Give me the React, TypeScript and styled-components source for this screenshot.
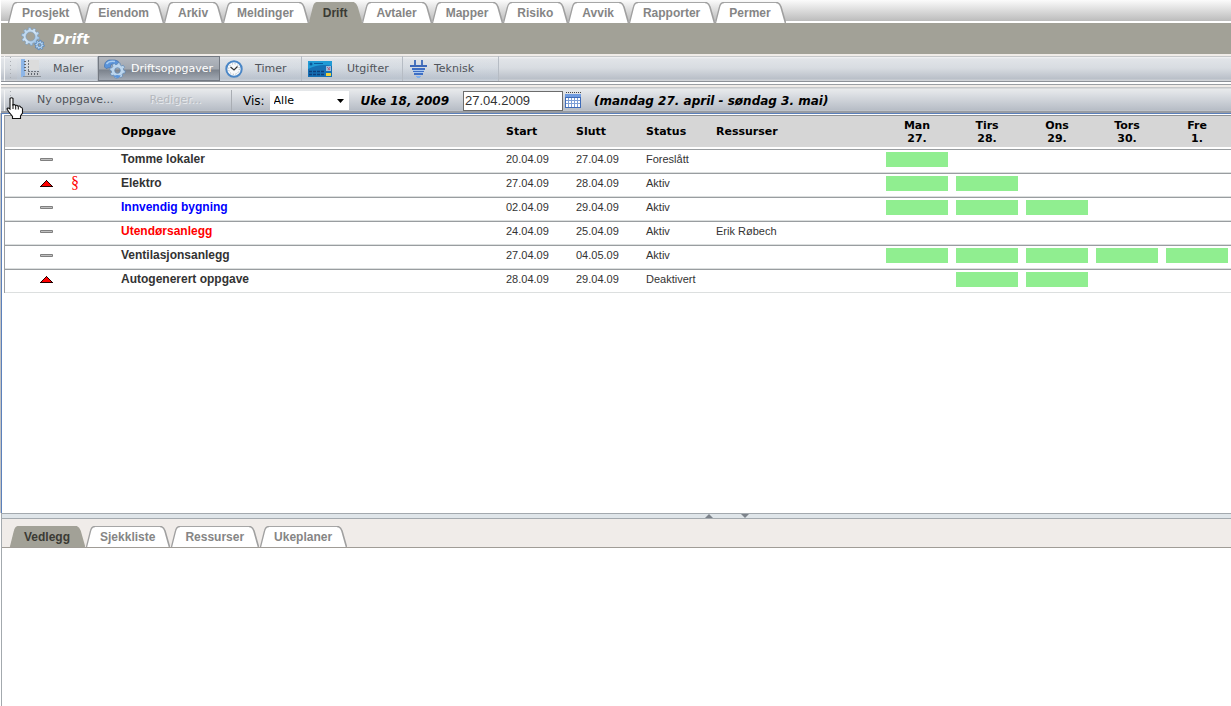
import React, { useState } from "react";
import styled, { createGlobalStyle, css } from "styled-components";

const ARIAL = `"Liberation Sans", Arial, sans-serif`;
const VERDANA = `Verdana, "DejaVu Sans", sans-serif`;
const OLIVE = "#a2a197";

const GlobalStyle = createGlobalStyle`
  * { box-sizing: border-box; }
  html, body, #root { height: 100%; }
  body { margin: 0; background: #fff; font: 11px/14px ${ARIAL}; color: #333; }
  button, input, select { font: inherit; margin: 0; }
`;

const Page = styled.div`
  min-height: 100%;
  display: flex;
  flex-direction: column;
  margin-left: 1px;
`;

const TopTabs = styled.nav`
  height: 23px;
  display: flex;
  align-items: flex-end;
  padding-left: 6px;
  background: linear-gradient(#fbfbfb, #bcbcbc 21px, #fff 21px);
  & > a + a { margin-left: -1px; }
`;

const TabLink = styled.a<{ $active?: boolean }>`
  height: 21px;
  display: flex;
  text-decoration: none;
  font: bold 12px/20px ${ARIAL};
  color: ${(p) => (p.$active ? "#3a3a34" : "#858585")};
`;

const TabLabel = styled.span<{ $active?: boolean }>`
  padding: 0 5px;
  border-top: 1px solid ${(p) => (p.$active ? OLIVE : "#a6a6a6")};
  background: ${(p) => (p.$active ? OLIVE : "#fff")};
`;

const Slope = styled.svg`
  width: 10px;
  height: 21px;
  flex: none;
`;

const TitleBar = styled.header`
  height: 31px;
  flex: none;
  display: flex;
  align-items: center;
  gap: 8px;
  padding-left: 20px;
  background: ${OLIVE};
`;

const Title = styled.h1`
  margin: 0;
  font: italic bold 14px/20px ${VERDANA};
  color: #fff;
`;

const Toolbar = styled.div`
  flex: none;
  height: 28px;
  display: flex;
  align-items: stretch;
  padding: 0 0 0 3px;
  border-top: 2px solid #f0ece8;
  border-bottom: 1px solid #8d9197;
  background: linear-gradient(#c6c8ca 0, #c6c8ca 1px, #f2f3f4 1px, #e1e4e8 3px, #d8dce1 12px, #b9bfc8 23px, #d0d3d7 24px);
`;

const FilterBar = styled(Toolbar)`
  height: 29px;
  margin-top: 2px;
  padding-top: 5px;
  border-top: 1px solid #9b9fa3;
  border-bottom: 2px solid #989ca2;
  background: linear-gradient(#f0ece8 2px, #c6c8ca 2px, #c6c8ca 3px, #e8eaec 4px, #dfe2e6 8px, #b7bdc6 25px, #c6cad0 26px);
`;

const Grip = styled.span`
  width: 13px;
  border-left: 1px solid #f2f3f4;
  background: linear-gradient(#a9adb2 1px, transparent 1px) 5px 5px / 1px 4px repeat-y;
`;

const ToolButton = styled.button<{ $w: number; $gap: number; $pad: number; $pressed?: boolean }>`
  width: ${(p) => p.$w}px;
  display: flex;
  align-items: center;
  gap: ${(p) => p.$gap}px;
  padding: 0 0 0 ${(p) => p.$pad}px;
  border: 0;
  border-right: 1px solid #b6bcc4;
  background: linear-gradient(transparent, rgba(190, 205, 222, 0.3));
  font: 11px/14px ${VERDANA};
  color: #50545a;
  white-space: nowrap;
  ${(p) =>
    p.$pressed &&
    css`
      color: #fff;
      border: 1px solid #737982;
      background: linear-gradient(#b3b8bf, #a0a6ae 12px, #7b828c 13px, #a2a9b3);
    `}
`;

const TextButton = styled.button`
  border: 0;
  padding: 0 16px 0 20px;
  background: none;
  font: 11px/14px ${VERDANA};
  color: #50545a;
  &:disabled { color: #b4b8be; text-shadow: 1px 1px 0 #e8eaed; }
`;

const Actions = styled.div`
  width: 215px;
  display: flex;
  align-items: center;
  border-right: 1px solid #a9adb3;
  padding-bottom: 2px;
`;

const Filters = styled.div`
  display: flex;
  align-items: center;
  padding-left: 11px;
  font: 12px/16px ${VERDANA};
  color: #000;
`;

const TypeSelect = styled.select`
  width: 79px;
  height: 19px;
  margin: 0 12px 0 5px;
  padding: 0 0 0 4px;
  border: 0;
  border-radius: 0;
  appearance: none;
  color: #000;
  font: 11px/18px ${VERDANA};
  background: #fff url("data:image/svg+xml,%3Csvg xmlns='http://www.w3.org/2000/svg' width='7' height='4'%3E%3Cpath d='M0 0h7L3.500 4z'/%3E%3C/svg%3E") no-repeat right 5px center;
`;

const Period = styled.strong`
  font: italic bold 12px/16px ${VERDANA};
  white-space: nowrap;
`;

const DateInput = styled.input`
  width: 100px;
  height: 20px;
  margin: 0 2px 0 14px;
  padding: 0 1px;
  border: 1px solid #6c6c6c;
  background: #fff;
  color: #333;
  font: 13px/16px ${ARIAL};
`;

const IconButton = styled.button`
  display: flex;
  padding: 0 0 2px;
  margin-right: 13px;
  border: 0;
  background: none;
`;

const TaskPane = styled.main`
  flex: none;
  min-height: 400px;
  padding: 1px 0 0 2px;
  border-top: 1px solid #5b80bb;
  border-left: 1px solid #5b80bb;
  box-shadow: -1px 0 0 #c3c3c3;
`;

const TaskTable = styled.table`
  width: 100%;
  table-layout: fixed;
  border-collapse: separate;
  border-spacing: 0;
  border-left: 1px solid #999da2;
`;

const HeadCell = styled.th<{ $center?: boolean }>`
  height: 32px;
  padding: 0 0 0 ${(p) => (p.$center ? 2 : 5)}px;
  border-top: 1px solid #8e9194;
  background: #d6d6d6;
  color: #000;
  font: bold 11px/13px ${VERDANA};
  text-align: ${(p) => (p.$center ? "center" : "left")};
`;

const GapCell = styled.td`
  height: 2px;
  padding: 0;
`;

const Cell = styled.td`
  height: 24px;
  padding: 0 3px 4px 5px;
  border-top: 1px solid #999da0;
  border-bottom: 1px solid #dcdfdf;
  color: #333;
  white-space: nowrap;
`;

const NameCell = styled(Cell)<{ $color?: string }>`
  font: bold 12px/14px ${ARIAL};
  color: ${(p) => p.$color ?? "#333"};
`;

const Bar = styled.div`
  height: 15px;
  background: #90ee90;
`;

const Paragraph = styled.span`
  display: block;
  padding-left: 1px;
  font: 16px/16px "Liberation Serif", serif;
  color: #f00;
`;

const Mark = styled.svg`
  display: block;
  margin-left: 30px;
`;

const Splitter = styled.div`
  flex: none;
  height: 6px;
  display: flex;
  justify-content: center;
  align-items: center;
  gap: 28px;
  padding-left: 220px;
  border: solid #a3a9ae;
  border-width: 1px 0 1px 1px;
  background: #dfe5e9;
`;

const Details = styled.section`
  flex: 1;
  border-left: 1px solid #a3a9ae;
`;

const DetailTabs = styled.nav`
  height: 29px;
  display: flex;
  align-items: flex-end;
  padding-left: 7px;
  border-bottom: 1px solid #a09c96;
  background: #f0ece9;
`;

const Hand = styled.svg`
  position: absolute;
  left: 6px;
  top: 96px;
`;

function Tab({ label, active }: { label: string; active?: boolean }) {
  const fill = active ? OLIVE : "#fff";
  const stroke = active ? OLIVE : "#a0a0a0";
  return (
    <TabLink href="#" $active={active}>
      <Slope viewBox="0 0 10 21">
        <path d="M1.500 21 L5.500 5 Q6.500 .5 10 .5 V21Z" fill={fill} />
        <path d="M1.500 21 L5.500 5 Q6.500 .5 10 .5" fill="none" stroke={stroke} strokeWidth="1.300" />
      </Slope>
      <TabLabel $active={active}>{label}</TabLabel>
      <Slope viewBox="0 0 10 21">
        <path d="M0 .5 Q3.500 .5 5 5 L9.500 21 H0Z" fill={fill} />
        <path d="M0 .5 Q3.500 .5 5 5 L9.500 21" fill="none" stroke={stroke} strokeWidth="1.600" />
      </Slope>
    </TabLink>
  );
}

/* Outline of a cog: each tooth is a flat top between two roots. */
function cogPath(cx: number, cy: number, outer: number, root: number, hole: number, teeth: number) {
  const step = (Math.PI * 2) / teeth;
  const at = (r: number, a: number) => `${(cx + r * Math.cos(a)).toFixed(2)} ${(cy + r * Math.sin(a)).toFixed(2)}`;
  let d = "";
  for (let i = 0; i < teeth; i++) {
    const a = i * step + 0.2;
    d += `${i ? "L" : "M"}${at(root, a - step * 0.32)} L${at(outer, a - step * 0.2)} L${at(outer, a + step * 0.2)} L${at(root, a + step * 0.32)} `;
  }
  return `${d}Z M${cx - hole} ${cy} a${hole} ${hole} 0 1 0 ${hole * 2} 0 a${hole} ${hole} 0 1 0 ${-hole * 2} 0Z`;
}

const GearsIcon = () => (
  <svg width="24" height="24" viewBox="0 0 24 24" fillRule="evenodd">
    <defs>
      <linearGradient id="steel" x1="0" y1="0" x2="1" y2="1">
        <stop offset="0" stopColor="#a9cdee" />
        <stop offset=".5" stopColor="#d3e5f5" />
        <stop offset="1" stopColor="#7fb0e0" />
      </linearGradient>
    </defs>
    <path d={cogPath(9.5, 9.5, 9, 7.2, 4.6, 10)} fill="url(#steel)" stroke="#7799bb" strokeWidth=".6" />
    <path d={cogPath(18.5, 18, 4.8, 3.5, 1.6, 8)} fill="#b5d5f3" stroke="#4f80b8" strokeWidth=".8" />
  </svg>
);

const TasksIcon = () => (
  <svg width="22" height="20" viewBox="0 0 22 20" fillRule="evenodd">
    <path d="M.5 8 Q0 2.500 5 1 H11 Q15 1.500 15.500 5 L11 6 Q9 4.500 7 5.500 L6.500 8.500 2 9.500Z" fill="#5b94da" stroke="#3e6ca8" strokeWidth=".6" />
    <path d="M2.500 5 Q5 1.500 11 2.500" fill="none" stroke="#a9cdf2" strokeWidth="1.500" />
    <path d={cogPath(13.5, 11.5, 7.8, 6.2, 2.8, 8)} fill="#bcd6ee" stroke="#5d87b5" strokeWidth=".7" />
    <path d="M9 17 L13 16 L17 16.500 L14 19.500Z" fill="#5b94da" />
  </svg>
);

const RulerIcon = () => (
  <svg width="20" height="19" viewBox="0 0 20 19" shapeRendering="crispEdges">
    <path d="M8 1h10v10H8z" fill="#dcdcdc" />
    <path d="M0 0h4v18H0z" fill="#8db6e8" />
    <path d="M4 13h15v5H4z" fill="#c6cad0" />
    <path d="M2 17.500h18" stroke="#8b9198" />
    <path d="M3 2.500h2M3 5.500h2M3 8.500h2M3 11.500h2M7.500 14v2M10.500 14v2M13.500 14v2M16.500 14v2" stroke="#5f666f" />
    <path d="M7.500 1v12M7 12.500h11" stroke="#70767e" strokeDasharray="2 1" />
  </svg>
);

const ClockIcon = () => (
  <svg width="18" height="18" viewBox="0 0 18 18">
    <circle cx="9" cy="9" r="7.700" fill="#f8fafc" stroke="#4a86c6" strokeWidth="2" />
    <circle cx="9" cy="9" r="5.300" fill="none" stroke="#9aa2a9" strokeWidth="1" strokeDasharray="1 1.775" />
    <path d="M5.500 7 L9 10 L12.500 6.500" fill="none" stroke="#333" strokeWidth="1.200" />
  </svg>
);

const CardIcon = () => (
  <svg width="24" height="16" viewBox="0 0 24 16">
    <rect width="24" height="16" fill="#1670b4" />
    <path d="M0 0h24v5Q12 2 0 8z" fill="#219bd6" />
    <circle cx="3" cy="3" r="1.500" fill="#0b5a9c" />
    <path d="M6 2.500h9" stroke="#0b5a9c" />
    <path d="M1 10.500h15M1 13.500h15" stroke="#0d3f7c" strokeWidth="1.500" strokeDasharray="3 1" />
    <rect x="18" y="5" width="5" height="5" fill="#9dbbd9" />
    <path d="M19 6l3 3M22 6l-2 3" stroke="#b05070" strokeWidth=".8" />
    <rect x="18" y="12" width="5" height="3" fill="#f0d238" />
  </svg>
);

const PlugIcon = () => (
  <svg width="18" height="18" viewBox="0 0 18 18" shapeRendering="crispEdges">
    <path d="M4 0h2v5H4zM11 0h2v5h-2z" fill="#4a74be" />
    <path d="M0 5h17v2H0z" fill="#3d68b8" />
    <path d="M2 8h13v2H2zM3 11h11v1H3zM4 13h9v2H4z" fill="#3f6fc4" />
    <path d="M3 10h11v1H3zM4 12h9v1H4z" fill="#a9c8f0" />
    <path d="M6 16h5v1H6zM7 17h3v1H7z" fill="#7fb0f0" />
  </svg>
);

const CalendarIcon = () => (
  <svg width="16" height="16" viewBox="0 0 16 16" shapeRendering="crispEdges">
    <path d="M0 2h16v14H0z" fill="#3e6bb8" />
    <path d="M0 2h16v3H0z" fill="#6f9be0" />
    <path d="M1 6h14v9H1z" fill="#fff" />
    <path d="M1 8.500h14M1 11.500h14M3.500 6v9M6.500 6v9M9.500 6v9M12.500 6v9" stroke="#7d9fd6" />
    <path d="M1 .5h15" stroke="#444" strokeDasharray="1 1" />
  </svg>
);

const High = () => (
  <Mark width="13" height="7" viewBox="0 0 13 7" role="img" aria-label="Høy prioritet" shapeRendering="crispEdges">
    <path d="M6 0h1v1h1v1h1v1h1v1h1v1h1v1h1v1H0V6h1V5h1V4h1V3h1V2h1V1h1z" fill="#200" />
    <path d="M6 1h1v1h1v1h1v1h1v1h1v1H2V5h1V4h1V3h1V2h1z" fill="#f00" />
  </Mark>
);

const Normal = () => (
  <Mark width="13" height="3" viewBox="0 0 13 3" role="img" aria-label="Normal prioritet">
    <path d="M.5 .5h12v2H.5z" fill="#c0c0c0" stroke="#808080" />
  </Mark>
);

type Task = { high?: boolean; legal?: boolean; name: string; color?: string; start: string; end: string; status: string; who?: string; days: number[] };

const tasks: Task[] = [
  { name: "Tomme lokaler", start: "20.04.09", end: "27.04.09", status: "Foreslått", days: [0] },
  { high: true, legal: true, name: "Elektro", start: "27.04.09", end: "28.04.09", status: "Aktiv", days: [0, 1] },
  { name: "Innvendig bygning", color: "#00f", start: "02.04.09", end: "29.04.09", status: "Aktiv", days: [0, 1, 2] },
  { name: "Utendørsanlegg", color: "#f00", start: "24.04.09", end: "25.04.09", status: "Aktiv", who: "Erik Røbech", days: [] },
  { name: "Ventilasjonsanlegg", start: "27.04.09", end: "04.05.09", status: "Aktiv", days: [0, 1, 2, 3, 4] },
  { high: true, name: "Autogenerert oppgave", start: "28.04.09", end: "29.04.09", status: "Deaktivert", days: [1, 2] },
];

const week = [["Man", "27."], ["Tirs", "28."], ["Ons", "29."], ["Tors", "30."], ["Fre", "1."]];
const modules = ["Prosjekt", "Eiendom", "Arkiv", "Meldinger", "Drift", "Avtaler", "Mapper", "Risiko", "Avvik", "Rapporter", "Permer"];
const details = ["Vedlegg", "Sjekkliste", "Ressurser", "Ukeplaner"];

const Column = styled.col<{ $w?: number }>`
  width: ${(p) => (p.$w ? `${p.$w}px` : "auto")};
`;

export default function App() {
  const [date, setDate] = useState("27.04.2009");
  return (
    <Page>
      <GlobalStyle />
      <TopTabs>{modules.map((m) => <Tab key={m} label={m} active={m === "Drift"} />)}</TopTabs>
      <TitleBar>
        <GearsIcon />
        <Title>Drift</Title>
      </TitleBar>
      <Toolbar>
        <Grip />
        <ToolButton $w={81} $gap={12} $pad={4}><RulerIcon />Maler</ToolButton>
        <ToolButton $w={122} $gap={5} $pad={5} $pressed><TasksIcon />Driftsoppgaver</ToolButton>
        <ToolButton $w={82} $gap={12} $pad={5}><ClockIcon />Timer</ToolButton>
        <ToolButton $w={101} $gap={15} $pad={6}><CardIcon />Utgifter</ToolButton>
        <ToolButton $w={96} $gap={6} $pad={7}><PlugIcon />Teknisk</ToolButton>
      </Toolbar>
      <FilterBar>
        <Grip />
        <Actions>
          <TextButton>Ny oppgave...</TextButton>
          <TextButton disabled>Rediger...</TextButton>
        </Actions>
        <Filters>
          <label htmlFor="type">Vis:</label>
          <TypeSelect id="type"><option>Alle</option></TypeSelect>
          <Period>Uke 18, 2009</Period>
          <DateInput aria-label="Dato" value={date} onChange={(e) => setDate(e.target.value)} />
          <IconButton aria-label="Velg dato"><CalendarIcon /></IconButton>
          <Period>(mandag 27. april - søndag 3. mai)</Period>
        </Filters>
      </FilterBar>
      <TaskPane>
        <TaskTable>
          <colgroup>
            <Column $w={60} />
            <Column $w={51} />
            <Column />
            <Column $w={70} />
            <Column $w={70} />
            <Column $w={70} />
            <Column $w={170} />
            {week.map(([d]) => <Column key={d} $w={70} />)}
          </colgroup>
          <thead>
            <tr>
              <HeadCell />
              <HeadCell />
              <HeadCell>Oppgave</HeadCell>
              <HeadCell>Start</HeadCell>
              <HeadCell>Slutt</HeadCell>
              <HeadCell>Status</HeadCell>
              <HeadCell>Ressurser</HeadCell>
              {week.map(([d, n]) => <HeadCell key={d} $center>{d}<br />{n}</HeadCell>)}
            </tr>
          </thead>
          <tbody>
            <tr><GapCell colSpan={12} /></tr>
            {tasks.map((t) => (
              <tr key={t.name}>
                <Cell>{t.high ? <High /> : <Normal />}</Cell>
                <Cell>{t.legal && <Paragraph>§</Paragraph>}</Cell>
                <NameCell $color={t.color}>{t.name}</NameCell>
                <Cell>{t.start}</Cell>
                <Cell>{t.end}</Cell>
                <Cell>{t.status}</Cell>
                <Cell>{t.who}</Cell>
                {week.map(([d], i) => <Cell key={d}>{t.days.includes(i) && <Bar />}</Cell>)}
              </tr>
            ))}
          </tbody>
        </TaskTable>
      </TaskPane>
      <Splitter>
        <svg width="8" height="4"><path d="M4 0 L8 4H0z" fill="#7d838b" /></svg>
        <svg width="8" height="4"><path d="M0 0h8L4 4z" fill="#7d838b" /></svg>
      </Splitter>
      <Details>
        <DetailTabs>{details.map((d) => <Tab key={d} label={d} active={d === "Vedlegg"} />)}</DetailTabs>
      </Details>
      <Hand width="18" height="24" viewBox="0 0 18 24">
        <path d="M4 2.500 Q5.500 1 7 2.500 V9 Q8.500 8 9.500 9.500 Q11 8.700 12 10.300 Q14 9.500 14.500 11 Q16.500 11.500 16.500 13 V17 L14.500 20 V22.500 H6.500 V20.500 L2.500 15.500 L1 13 Q1.500 11 4 13z" fill="#fff" stroke="#111" strokeWidth="1.100" />
        <path d="M7 8v5M9.700 9.500v4M12.300 10.500v3" stroke="#111" />
      </Hand>
    </Page>
  );
}
